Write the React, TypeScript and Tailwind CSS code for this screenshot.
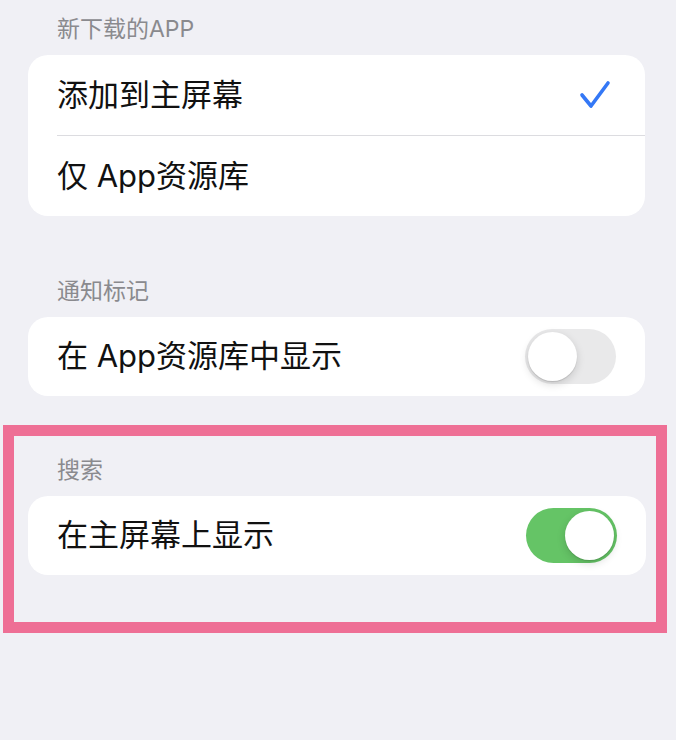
import React from "react";

const font = { fontFamily: '"Inter", "Noto Sans CJK SC", sans-serif' };

function Toggle({ on }: { on: boolean }) {
  return (
    <div
      className={`w-[91px] h-[55px] rounded-full p-[3px] flex ${
        on ? "bg-[#65c466] justify-end" : "bg-[#e9e9ea] justify-start"
      }`}
    >
      <div className="w-[49px] h-[49px] rounded-full bg-white shadow-[0_3px_8px_rgba(0,0,0,0.15),0_1px_1px_rgba(0,0,0,0.12)]" />
    </div>
  );
}

function Check() {
  return (
    <svg width="32" height="30" viewBox="0 0 32 30" className="mr-[5px]">
      <polyline
        points="3,15 12,26 29,3"
        fill="none"
        stroke="#3478f6"
        strokeWidth="3.6"
        strokeLinecap="round"
        strokeLinejoin="round"
      />
    </svg>
  );
}

function Label({ children }: { children: React.ReactNode }) {
  return (
    <div className="pl-[29px] text-[23px] leading-[22px] text-[#8a8a8e] mb-[15px]">
      {children}
    </div>
  );
}

function Row({
  text,
  right,
  divider,
}: {
  text: string;
  right?: React.ReactNode;
  divider?: boolean;
}) {
  return (
    <div className="pl-[29px] flex flex-col">
      <div className="h-[80px] flex items-center justify-between pr-[29px]">
        <span className="text-[31px] text-[#111]">{text}</span>
        {right}
      </div>
      {divider && <div className="h-px bg-[#dcdce0]" />}
    </div>
  );
}

export default function App() {
  return (
    <div className="w-[676px] h-[740px] bg-[#f0f0f5] overflow-hidden" style={font}>
      <div className="pt-[18px] pl-[28px] pr-[31px]">
        <Label>新下载的APP</Label>
        <div className="bg-white rounded-[20px] overflow-hidden">
          <Row text="添加到主屏幕" right={<Check />} divider />
          <Row text="仅 App资源库" />
        </div>

        <div className="mt-[64px]">
          <Label>通知标记</Label>
          <div className="bg-white rounded-[20px] h-[79px] pl-[29px] pr-[29px] flex items-center justify-between">
            <span className="text-[31px] text-[#111]">在 App资源库中显示</span>
            <Toggle on={false} />
          </div>
        </div>
      </div>

      <div className="mt-[29px] ml-[3px] w-[664px] border-[11px] border-[#ee6f95] pt-[23px] pl-[14px] pr-[10px] pb-[47px]">
        <Label>搜索</Label>
        <div className="bg-white rounded-[20px] h-[79px] pl-[29px] pr-[29px] flex items-center justify-between">
          <span className="text-[31px] text-[#111]">在主屏幕上显示</span>
          <Toggle on={true} />
        </div>
      </div>
    </div>
  );
}
